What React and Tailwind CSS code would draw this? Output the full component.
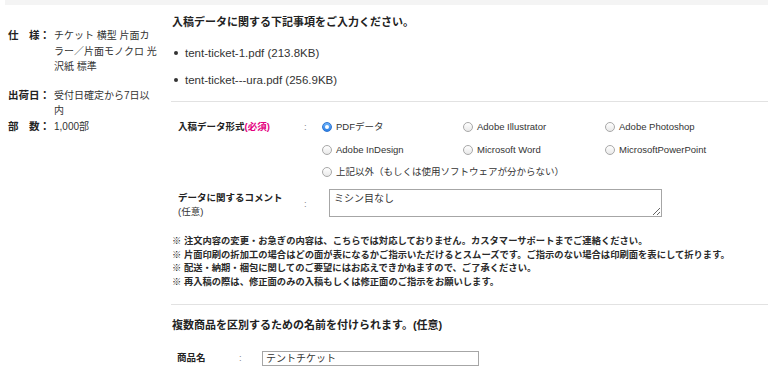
import React from 'react';

const specs = [
  { label: '仕　様：', value: 'チケット 横型 片面カラー／片面モノクロ 光沢紙 標準', gap: 'mt-0' },
  { label: '出荷日：', value: '受付日確定から7日以内', gap: 'mt-[13px]' },
  { label: '部　数：', value: '1,000部', gap: 'mt-0' },
];

const files = ['tent-ticket-1.pdf (213.8KB)', 'tent-ticket---ura.pdf (256.9KB)'];

const formats = [
  'PDFデータ',
  'Adobe Illustrator',
  'Adobe Photoshop',
  'Adobe InDesign',
  'Microsoft Word',
  'MicrosoftPowerPoint',
];

const notes = [
  '※ 注文内容の変更・お急ぎの内容は、こちらでは対応しておりません。カスタマーサポートまでご連絡ください。',
  '※ 片面印刷の折加工の場合はどの面が表になるかご指示いただけるとスムーズです。ご指示のない場合は印刷面を表にして折ります。',
  '※ 配送・納期・梱包に関してのご要望にはお応えできかねますので、ご了承ください。',
  '※ 再入稿の際は、修正面のみの入稿もしくは修正面のご指示をお願いします。',
];

const Radio = ({ checked, label, wide }) => (
  <label className={`flex items-center gap-[4px] h-[16px] ${wide ? 'col-span-3' : ''}`}>
    {checked ? (
      <span className="w-[10px] h-[10px] rounded-full bg-gradient-to-b from-[#6cb3fa] to-[#2a7fe6] border border-[#2f76d2] flex items-center justify-center">
        <span className="w-[4px] h-[4px] rounded-full bg-white" />
      </span>
    ) : (
      <span className="w-[10px] h-[10px] rounded-full bg-gradient-to-b from-white to-[#e9e9e9] border border-[#a8a8a8]" />
    )}
    <span>{label}</span>
  </label>
);

export default function App() {
  return (
    <div className="w-[768px] h-[390px] overflow-hidden bg-white text-[#333] font-['Liberation_Sans','Noto_Sans_CJK_JP',sans-serif]">
      <div className="ml-[5px] h-[5px] bg-[#f4f4f4]" />

      <div className="flex">
        {/* order summary */}
        <aside className="w-[160px] shrink-0 pl-[8px] pt-[23px]">
          {specs.map((s) => (
            <div key={s.label} className={`flex text-[10px] leading-[15.5px] ${s.gap}`}>
              <span className="w-[46px] shrink-0 font-bold text-[10.5px] text-[#222]">{s.label}</span>
              <span className="w-[104px]">{s.value}</span>
            </div>
          ))}
        </aside>

        <main className="flex-1 min-w-0 pl-[11px]">
          <h2 className="ml-px mt-[9px] text-[11px] leading-[16px] font-bold text-[#222]">
            入稿データに関する下記事項をご入力ください。
          </h2>
          <ul className="mt-[15px] flex flex-col gap-[11px] text-[11.5px] leading-[16px]">
            {files.map((f) => (
              <li key={f} className="flex items-center">
                <span className="ml-[3px] w-[4px] h-[4px] rounded-full bg-[#333]" />
                <span className="ml-[7px]">{f}</span>
              </li>
            ))}
          </ul>

          <div className="mt-[13px] h-px bg-[#e2e2e2]" />

          {/* data format */}
          <div className="ml-[7px] mt-[17px] grid grid-cols-[126px_18px_1fr] text-[9.5px] leading-[16px]">
            <div className="font-bold text-[#222]">
              入稿データ形式<span className="text-[#e4007f]">(必須)</span>
            </div>
            <div className="text-[#888]">:</div>
            <div className="grid grid-cols-[141px_142px_1fr] gap-y-[6.5px]">
              {formats.map((f, i) => (
                <Radio key={f} label={f} checked={i === 0} />
              ))}
              <Radio wide label="上記以外（もしくは使用ソフトウェアが分からない）" />
            </div>
          </div>

          {/* comment */}
          <div className="ml-[7px] mt-[9px] grid grid-cols-[126px_18px_1fr] text-[9.5px]">
            <div className="pt-[2px] leading-[14px]">
              <div className="font-bold text-[#222]">データに関するコメント</div>
              <div>(任意)</div>
            </div>
            <div className="pt-[8px] leading-[14px] text-[#888]">:</div>
            <div className="pl-[7px]">
              <textarea
                defaultValue="ミシン目なし"
                className="block w-[333px] h-[28px] border border-[#a6a6a6] px-[4px] py-[2px] text-[10px] leading-[13px] text-[#333] outline-none"
              />
            </div>
          </div>

          <div className="mt-[16px] ml-px flex flex-col text-[9.3px] leading-[13.7px] font-bold text-[#2a2a2a] whitespace-nowrap">
            {notes.map((n) => (
              <p key={n}>{n}</p>
            ))}
          </div>

          <div className="mt-[14px] h-px bg-[#e2e2e2]" />

          <h2 className="ml-px mt-[12px] text-[11px] leading-[16px] font-bold text-[#222]">
            複数商品を区別するための名前を付けられます。(任意)
          </h2>

          <div className="ml-[6px] mt-[18px] flex items-center text-[9.5px]">
            <span className="w-[62px] font-bold text-[#222]">商品名</span>
            <span className="w-[23px] text-[#888]">:</span>
            <input
              defaultValue="テントチケット"
              className="w-[217px] h-[15px] border border-[#a6a6a6] px-[3px] text-[10px] text-[#333] outline-none"
            />
          </div>
        </main>
      </div>
    </div>
  );
}
